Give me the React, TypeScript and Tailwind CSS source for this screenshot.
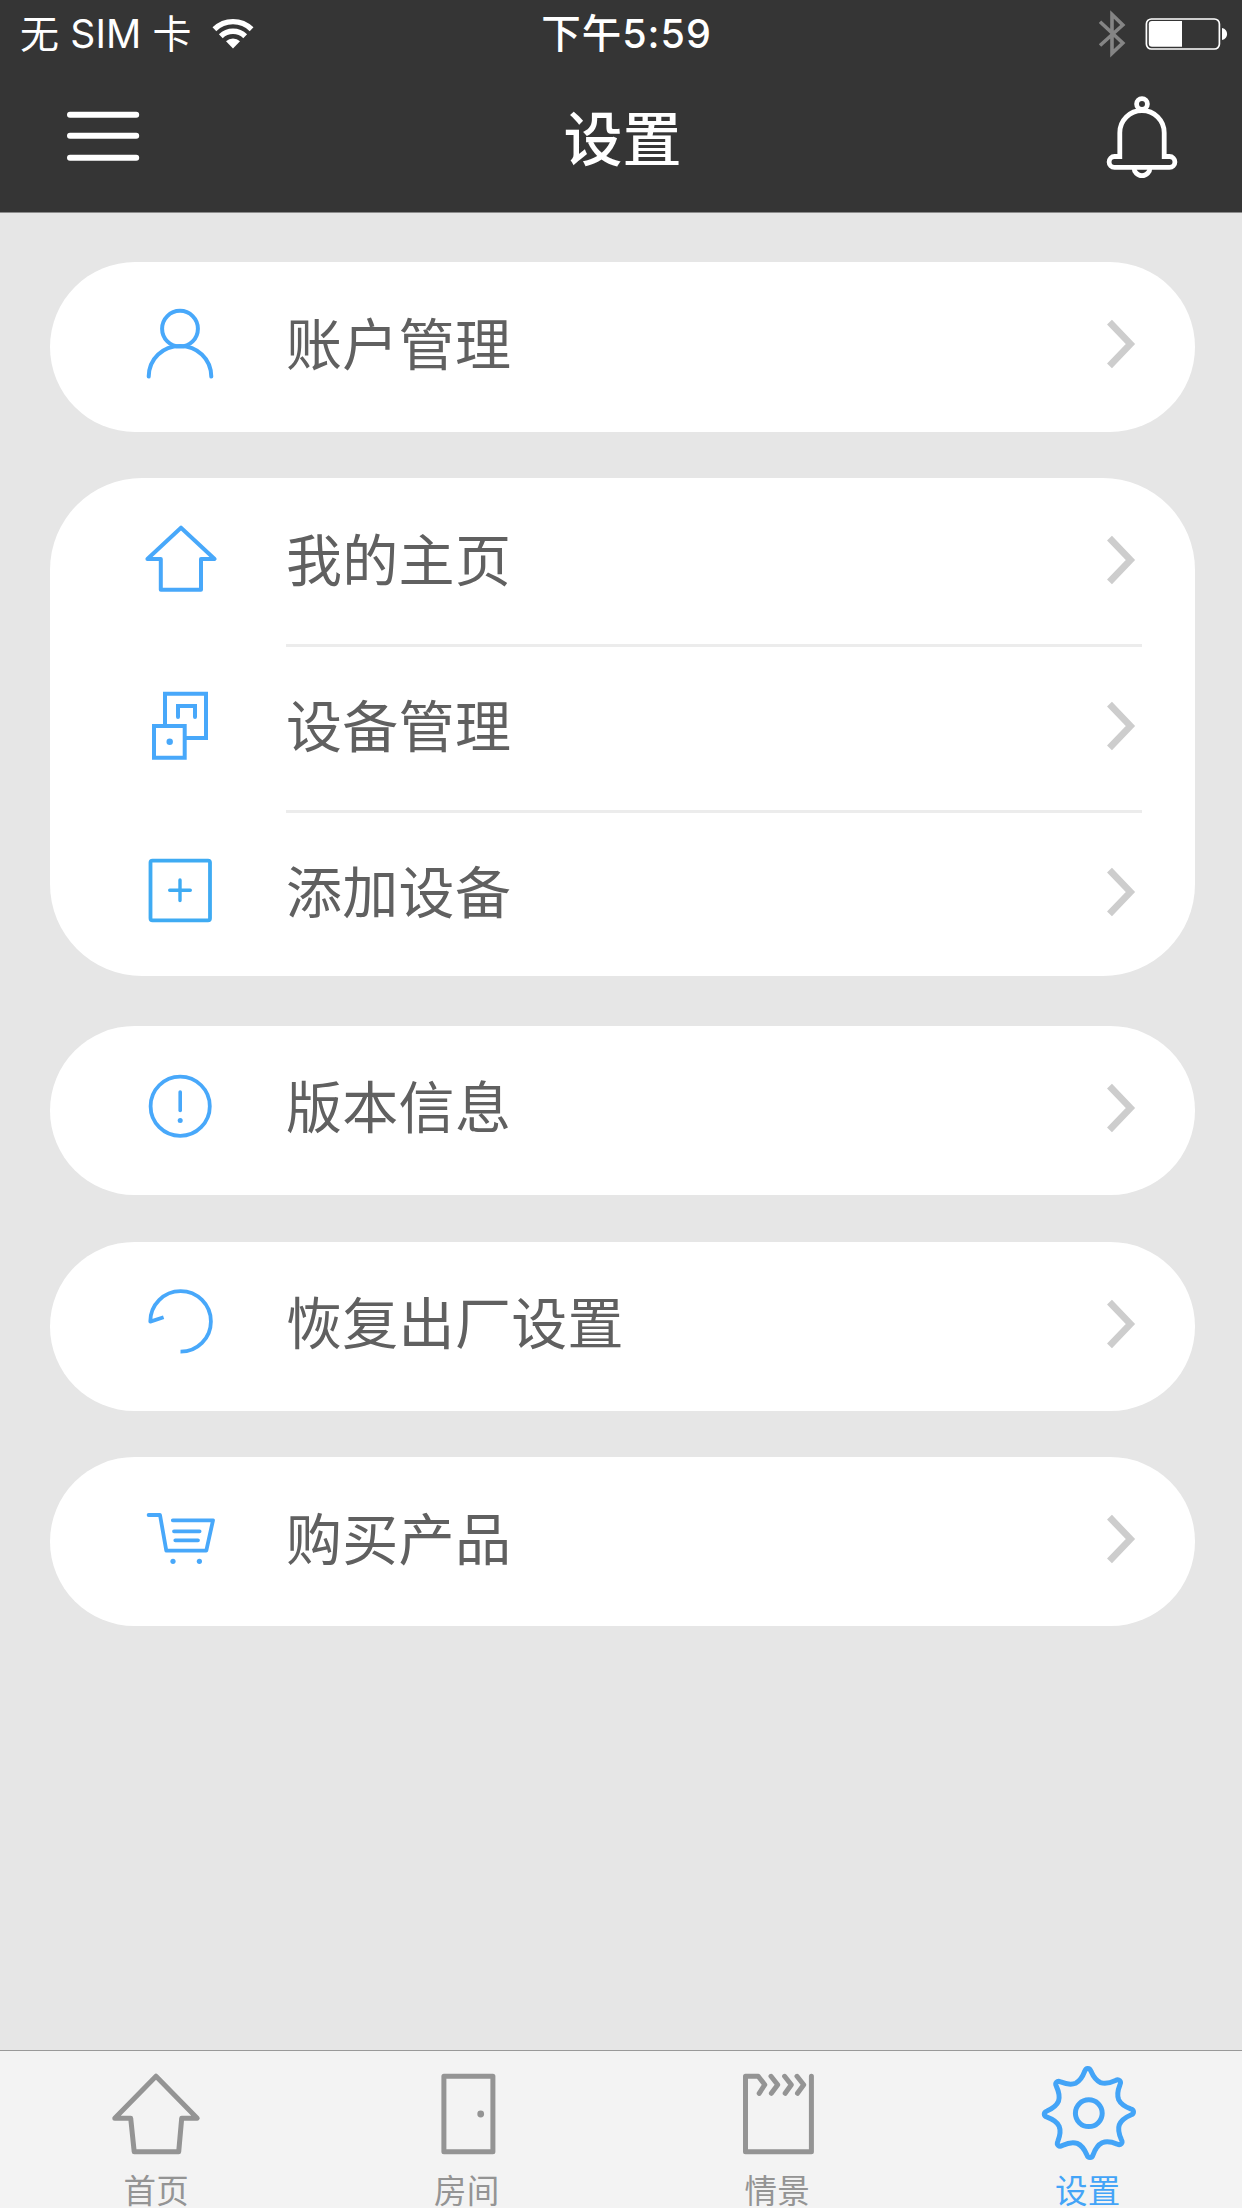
import type { ReactNode } from 'react';

const SANS = "font-['Noto_Sans_CJK_SC',sans-serif]";

function polar(r: number, deg: number): string {
  const a = ((deg - 90) * Math.PI) / 180;
  return `${(51.9 + r * Math.cos(a)).toFixed(2)} ${(48 + r * Math.sin(a)).toFixed(2)}`;
}

// Eight-toothed gear: each tooth runs valley -> rounded tip -> valley.
function gearPath(): string {
  let d = `M${polar(32.6, -24)}`;
  for (let i = 0; i < 8; i++) {
    const t = i * 45 - 1.5;
    d += `C${polar(33.2, t - 13)} ${polar(36.5, t - 8.5)} ${polar(42, t - 4.2)}`;
    d += `C${polar(45.6, t - 2.4)} ${polar(45.6, t + 2.4)} ${polar(42, t + 4.2)}`;
    d += `C${polar(36.5, t + 8.5)} ${polar(33.2, t + 13)} ${polar(32.6, t + 22.5)}`;
  }
  return d + 'Z';
}

function RowIcon({ children, color = 'text-[#48a8fa]' }: { children: ReactNode; color?: string }) {
  return (
    <svg viewBox="0 0 80 80" className={`h-[80px] w-[80px] shrink-0 ${color}`} fill="none" stroke="currentColor" strokeWidth="4" strokeLinecap="round">
      {children}
    </svg>
  );
}

const icons = {
  user: (
    <RowIcon>
      <circle cx="40" cy="24.7" r="17.9" />
      <path d="M8.7 72.6C9 54.5 23 42 40 42S71 54.5 71.3 72.6" />
    </RowIcon>
  ),
  home: (
    <RowIcon>
      <path d="M41 7.7L74.6 39H61V69.7H20.8V39H7.4Z" strokeLinejoin="round" />
    </RowIcon>
  ),
  devices: (
    <RowIcon>
      <path d="M25 40V7.7H66V52H45M14 40H44.7V71.7H14Z" />
      <path d="M38 31V20H55V31" />
      <circle cx="29.7" cy="55.7" r="3.2" fill="currentColor" stroke="none" />
    </RowIcon>
  ),
  add: (
    <RowIcon color="text-[#3fabf3]">
      <rect x="10.5" y="8.6" width="59.5" height="59.7" rx="2" strokeWidth="3.8" />
      <path d="M40 28V48.6M29.7 38.3H50.3" strokeWidth="3.4" />
    </RowIcon>
  ),
  info: (
    <RowIcon>
      <circle cx="40.2" cy="38.2" r="29.6" strokeWidth="3.8" />
      <path d="M40.2 24V42.4" strokeWidth="3.6" />
      <circle cx="40.2" cy="52.4" r="2.5" fill="currentColor" stroke="none" />
    </RowIcon>
  ),
  restore: (
    <RowIcon>
      <path d="M40.5 67.7A30.3 30.3 0 1 0 10.3 37.6L23.6 33.3" strokeWidth="3.8" strokeLinecap="butt" strokeLinejoin="round" />
    </RowIcon>
  ),
  cart: (
    <RowIcon>
      <path d="M8.6 16H20L26.3 51.7H66.3L73 21.3H32.8M34 32.3H59.6M35.3 41.3H58" strokeWidth="3.8" strokeLinejoin="round" />
      <circle cx="33" cy="62.3" r="2.6" fill="currentColor" stroke="none" />
      <circle cx="59.4" cy="62.3" r="2.6" fill="currentColor" stroke="none" />
    </RowIcon>
  ),
};

type Item = { icon: keyof typeof icons; label: string };

function Row({ icon, label, divided }: Item & { divided: boolean }) {
  return (
    <div className="flex h-[166px] items-center pr-[53px] pl-[90px]">
      <div className="mr-[66px] pb-[2px]">{icons[icon]}</div>
      <div className={`flex h-full flex-1 items-center justify-between border-t-[3px] pb-[5px] ${divided ? 'border-[#ececec]' : 'border-transparent'}`}>
        <span className="pb-[7px] text-[56px] leading-[80px] tracking-[0.3px] text-[#606060]">{label}</span>
        <svg viewBox="0 0 36 50" className="h-[50px] w-[36px]" fill="none" stroke="#cdcdcd" strokeWidth="6.8">
          <path d="M3.5 3.2L24.4 25L3.5 46.8" />
        </svg>
      </div>
    </div>
  );
}

function Card({ items, className }: { items: Item[]; className: string }) {
  return (
    <section className={`mx-[50px] w-[1145px] bg-white ${className}`}>
      {items.map((item, i) => (
        <Row key={item.label} {...item} divided={i > 0} />
      ))}
    </section>
  );
}

function Tab({ label, active = false, children }: { label: string; active?: boolean; children: ReactNode }) {
  return (
    <div className={`flex flex-1 flex-col items-center pt-[14px] ${active ? 'text-[#43a4f7]' : 'text-[#949494]'}`}>
      <svg viewBox="0 0 100 100" className="h-[100px] w-[100px] shrink-0" fill="none" stroke="currentColor" strokeWidth="5" strokeLinecap="round" strokeLinejoin="round">
        {children}
      </svg>
      <span className="mt-[7px] ml-[2px] text-[32.5px] leading-[34px] tracking-[0.3px]">{label}</span>
    </div>
  );
}

export default function App() {
  return (
    <div className={`flex h-[2208px] w-[1242px] flex-col overflow-hidden bg-[#e6e6e6] ${SANS}`}>
      <header className="h-[213px] border-b border-[#8c8c8c] bg-[#353535] text-white">
        <div className="grid h-[68px] grid-cols-3 items-center">
          <div className="flex items-center pl-[20px]">
            <span className="font-[Inter,'Noto_Sans_CJK_SC',sans-serif] text-[39px] leading-[68px] tracking-[0.15px] whitespace-pre">无 SIM 卡</span>
            <svg viewBox="0 0 44 34" className="mt-[-2px] ml-[19px] h-[34px] w-[44px]" fill="none" stroke="white" strokeWidth="5.4">
              <path d="M3.4 13.2A26.6 26.6 0 0 1 40.6 13.2" />
              <path d="M9.8 20.2A17.4 17.4 0 0 1 34.2 20.2" />
              <path d="M22 32.4L15 25.2A10.3 10.3 0 0 1 29 25.2Z" fill="white" stroke="none" />
            </svg>
          </div>
          <div className="pl-[11px] text-center font-[Inter,'Noto_Sans_CJK_SC',sans-serif] text-[39.5px] leading-[68px] font-medium tracking-[1px]">
            下午5:59
          </div>
          <div className="flex items-center justify-end pr-[10px]">
            <svg viewBox="1096 8 136 52" className="h-[52px] w-[136px]" fill="none">
              <path d="M1100 21.7L1122.8 43L1112 53.3V14.5L1122.8 25L1100 45.5" stroke="#858585" strokeWidth="3.6" />
              <rect x="1146.4" y="19" width="73" height="30" rx="5" stroke="white" strokeWidth="1.7" />
              <path d="M1182 21V46.7H1152A3.2 3.2 0 0 1 1148.8 43.5V24.2A3.2 3.2 0 0 1 1152 21Z" fill="white" />
              <path d="M1222 28C1228.8 29 1228.8 39 1222 40Z" fill="white" />
            </svg>
          </div>
        </div>
        <div className="grid h-[144px] grid-cols-3 items-center">
          <svg viewBox="0 0 80 60" className="ml-[63px] h-[60px] w-[80px]" stroke="white" strokeWidth="6" strokeLinecap="round">
            <path d="M7 4.8H73.2M7 25.8H73.2M7 47.7H73.2" />
          </svg>
          <h1 className="pb-[8px] pl-[3px] text-center text-[59px] leading-[80px] font-medium">设置</h1>
          <svg viewBox="0 0 84 92" className="mr-[58px] mb-[8px] h-[92px] w-[84px] justify-self-end" fill="none" stroke="white" strokeWidth="4.8">
            <circle cx="42" cy="14" r="5.4" />
            <path d="M19.8 66.5V42.7A22.2 22.2 0 0 1 64.2 42.7V66.5H69.5A5.4 5.4 0 0 1 69.5 77.3H14.5A5.4 5.4 0 0 1 14.5 66.5Z" />
            <path d="M34 77.5A8 8.2 0 0 0 50 77.5" />
          </svg>
        </div>
      </header>

      <main className="flex-1 pt-[49px]">
        <Card className="h-[169.5px] rounded-[85px]" items={[{ icon: 'user', label: '账户管理' }]} />
        <Card
          className="mt-[46.5px] h-[497.5px] rounded-[92px]"
          items={[
            { icon: 'home', label: '我的主页' },
            { icon: 'devices', label: '设备管理' },
            { icon: 'add', label: '添加设备' },
          ]}
        />
        <Card className="mt-[50px] h-[169px] rounded-[85px]" items={[{ icon: 'info', label: '版本信息' }]} />
        <Card className="mt-[47px] h-[169px] rounded-[85px]" items={[{ icon: 'restore', label: '恢复出厂设置' }]} />
        <Card className="mt-[46.5px] h-[169px] rounded-[85px]" items={[{ icon: 'cart', label: '购买产品' }]} />
      </main>

      <nav className="flex h-[158px] border-t border-[#999999] bg-[#f3f3f3]">
        <Tab label="首页">
          <path d="M51 11.2L92.2 53.3H76.7L73.7 86.7H29.2L25.7 53.3H9.8Z" />
        </Tab>
        <Tab label="房间">
          <path d="M27.9 11.3H76.9V86.7H27.9Z" />
          <circle cx="64.7" cy="49" r="3.4" fill="currentColor" stroke="none" />
        </Tab>
        <Tab label="情景">
          <path d="M85.4 11.3V86.7H19.5V11.3H32.2L38.8 19.7L33.2 28.3M45 11.3L51.7 19.7L45.4 28.3M58.6 11.3L65.3 19.7L59.2 28.3M71 11.3L77.7 19.7L71.5 28.3" />
        </Tab>
        <Tab label="设置" active>
          <path d={gearPath()} />
          <circle cx="51.8" cy="48.2" r="13.4" />
        </Tab>
      </nav>
    </div>
  );
}
